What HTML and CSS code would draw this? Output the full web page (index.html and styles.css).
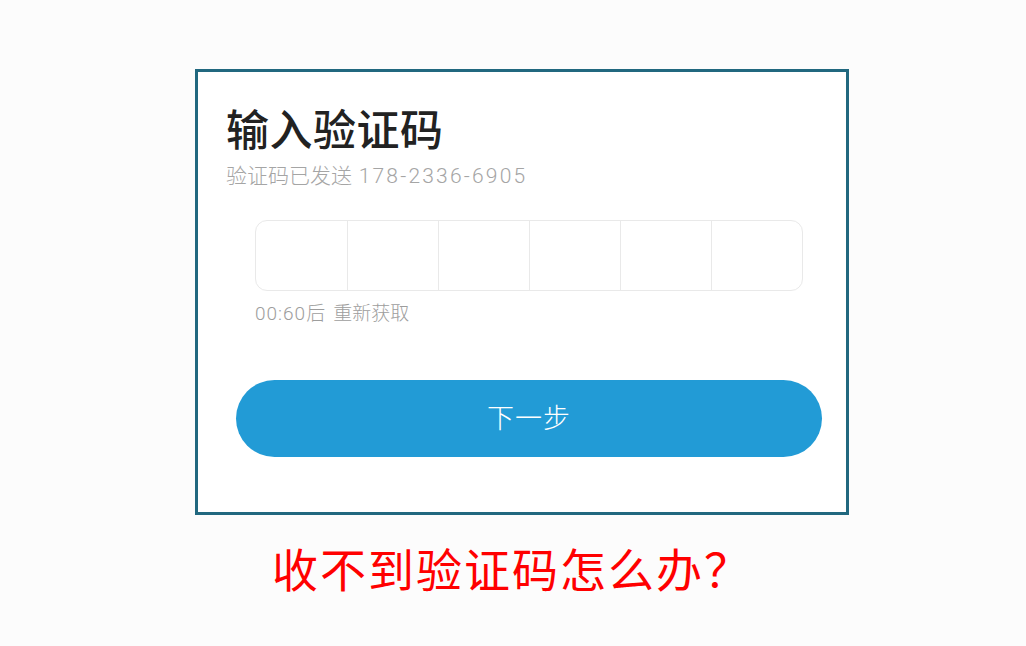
FILE: index.html
```html
<!DOCTYPE html>
<html lang="zh-CN">
<head>
<meta charset="utf-8">
<title>输入验证码</title>
<link rel="stylesheet" href="styles.css">
</head>
<body>
<div class="page">
  <div class="card">
    <h1 class="title">输入验证码</h1>
    <p class="sub">验证码已发送 <span class="num">178-2336-6905</span></p>
    <div class="cells">
      <div class="cell"></div>
      <div class="cell"></div>
      <div class="cell"></div>
      <div class="cell"></div>
      <div class="cell"></div>
      <div class="cell"></div>
    </div>
    <p class="timer"><span class="num">00:60</span>后 重新获取</p>
    <button class="next">下一步</button>
  </div>
  <div class="question">收不到验证码怎么办？</div>
</div>
</body>
</html>
```

FILE: styles.css
```css
html, body {
  margin: 0;
  padding: 0;
  background: #fcfcfc;
}
body {
  font-family: "Noto Sans CJK SC", "Noto Sans", sans-serif;
}
.page {
  padding-top: 69px;
  padding-left: 195px;
}
.card {
  box-sizing: border-box;
  width: 654px;
  height: 446px;
  border: 3px solid #21687f;
  background: #fff;
  padding: 34px 24px 0 28px;
}
.title {
  margin: 0;
  font-size: 43px;
  line-height: 43px;
  font-weight: 500;
  color: #222;
  letter-spacing: 0.5px;
}
.sub {
  margin: 15px 0 0;
  font-size: 21px;
  line-height: 21px;
  font-weight: 300;
  color: #a5a5a5;
  word-spacing: 2px;
}
.sub .num {
  font-size: 21px;
  letter-spacing: 2.2px;
}
.num {
  font-family: Roboto, "Noto Sans", sans-serif;
  font-weight: 300;
}
.cells {
  margin: 33px 19px 0 29px;
  height: 71px;
  box-sizing: border-box;
  border: 1px solid #e9e9e9;
  border-radius: 12px;
  display: grid;
  grid-template-columns: repeat(6, 1fr);
}
.cell {
  border-left: 1px solid #e9e9e9;
}
.cell:first-child {
  border-left: none;
}
.timer {
  margin: 11px 0 0 29px;
  font-size: 19px;
  line-height: 20px;
  font-weight: 300;
  color: #9d9d9d;
  word-spacing: 4px;
}
.timer .num {
  font-size: 19px;
  letter-spacing: 1px;
}
.next {
  display: block;
  margin: 56px 0 0 10px;
  width: 586px;
  height: 77px;
  border: none;
  border-radius: 39px;
  background: #229bd6;
  color: #fff;
  font-family: "Noto Sans CJK SC", sans-serif;
  font-size: 27px;
  line-height: 27px;
  font-weight: 300;
  letter-spacing: 1px;
  padding: 0 0 4px;
}
.question {
  margin: 27px 0 0 77px;
  font-size: 46px;
  line-height: 50px;
  color: #ff0000;
  letter-spacing: 2px;
}
```
